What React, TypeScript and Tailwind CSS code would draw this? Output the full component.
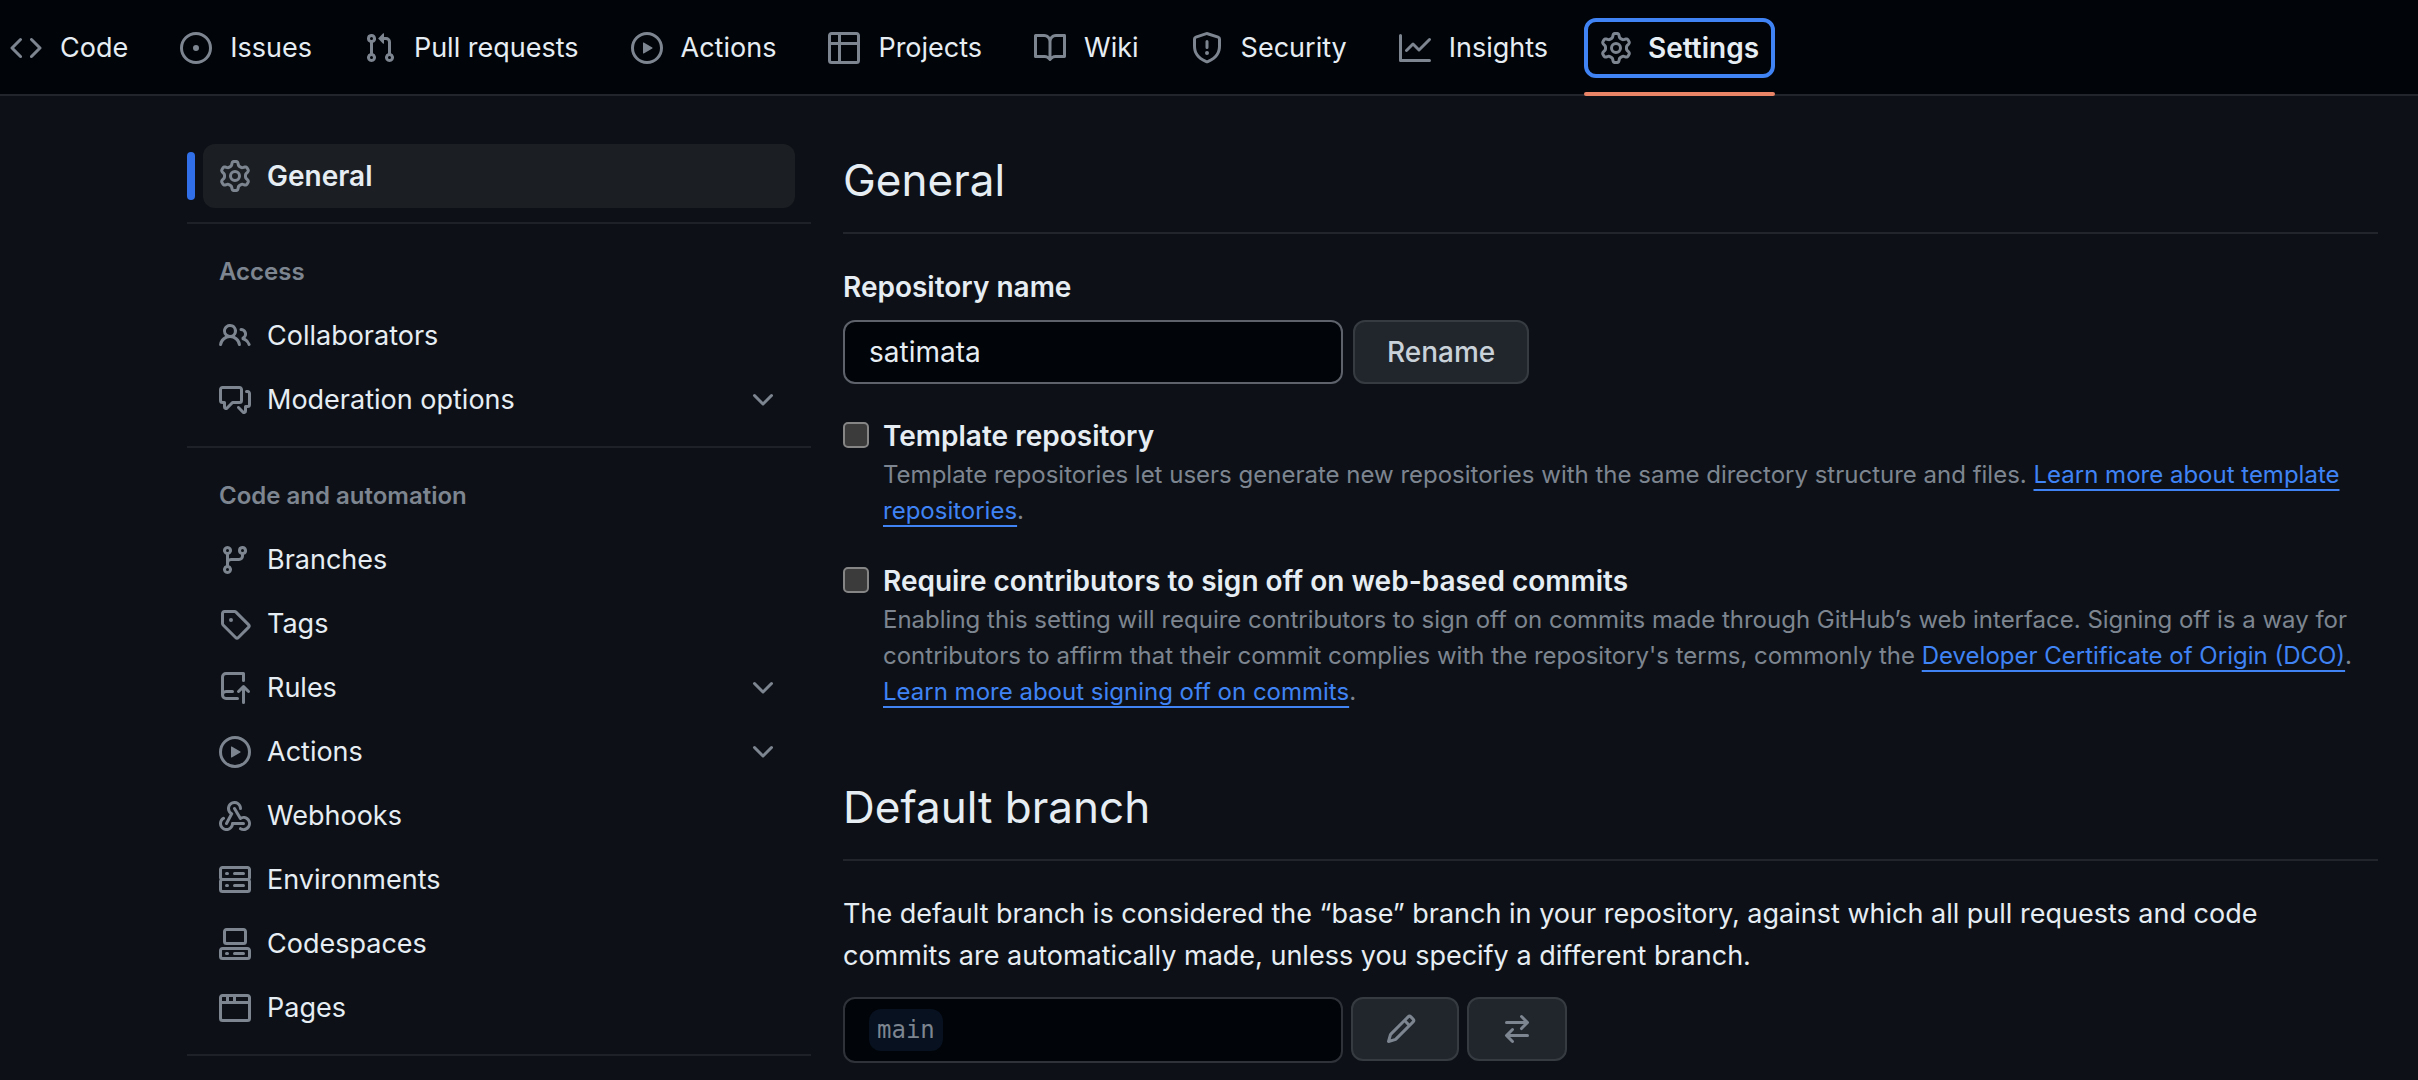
import React from "react";

const icons = {
  code: "m11.28 3.22 4.25 4.25a.75.75 0 0 1 0 1.06l-4.25 4.25a.749.749 0 0 1-1.275-.326.749.749 0 0 1 .215-.734L13.94 8l-3.72-3.72a.749.749 0 0 1 .326-1.275.749.749 0 0 1 .734.215Zm-6.56 0a.751.751 0 0 1 1.042.018.751.751 0 0 1 .018 1.042L2.06 8l3.72 3.72a.749.749 0 0 1-.326 1.275.749.749 0 0 1-.734-.215L.47 8.53a.75.75 0 0 1 0-1.06Z",
  issue: "M8 9.5a1.5 1.5 0 1 0 0-3 1.5 1.5 0 0 0 0 3ZM8 0a8 8 0 1 1 0 16A8 8 0 0 1 8 0ZM1.5 8a6.5 6.5 0 1 0 13 0 6.5 6.5 0 0 0-13 0Z",
  pull: "M1.5 3.25a2.25 2.25 0 1 1 3 2.122v5.256a2.251 2.251 0 1 1-1.5 0V5.372A2.25 2.25 0 0 1 1.5 3.25Zm5.677-.177L9.573.677A.25.25 0 0 1 10 .854V2.5h1A2.5 2.5 0 0 1 13.5 5v5.628a2.251 2.251 0 1 1-1.5 0V5a1 1 0 0 0-1-1h-1v1.646a.25.25 0 0 1-.427.177L7.177 3.427a.25.25 0 0 1 0-.354ZM3.75 2.5a.75.75 0 1 0 0 1.5.75.75 0 0 0 0-1.5Zm0 9.5a.75.75 0 1 0 0 1.5.75.75 0 0 0 0-1.5Zm8.25.75a.75.75 0 1 0 1.5 0 .75.75 0 0 0-1.5 0Z",
  play: "M8 0a8 8 0 1 1 0 16A8 8 0 0 1 8 0ZM1.5 8a6.5 6.5 0 1 0 13 0 6.5 6.5 0 0 0-13 0Zm4.879-2.773 4.264 2.559a.25.25 0 0 1 0 .428l-4.264 2.559A.25.25 0 0 1 6 10.559V5.442a.25.25 0 0 1 .379-.215Z",
  table: "M0 1.75C0 .784.784 0 1.75 0h12.5C15.216 0 16 .784 16 1.75v12.5A1.75 1.75 0 0 1 14.25 16H1.75A1.75 1.75 0 0 1 0 14.25ZM6.5 6.5v8h7.75a.25.25 0 0 0 .25-.25V6.5Zm8-1.5V1.75a.25.25 0 0 0-.25-.25H6.5V5Zm-13 1.5v7.75c0 .138.112.25.25.25H5v-8ZM5 5V1.5H1.75a.25.25 0 0 0-.25.25V5Z",
  book: "M0 1.75A.75.75 0 0 1 .75 1h4.253c1.227 0 2.317.59 3 1.501A3.743 3.743 0 0 1 11.006 1h4.245a.75.75 0 0 1 .75.75v10.5a.75.75 0 0 1-.75.75h-4.507a2.25 2.25 0 0 0-1.591.659l-.622.621a.75.75 0 0 1-1.06 0l-.622-.621A2.25 2.25 0 0 0 5.258 13H.75a.75.75 0 0 1-.75-.75Zm7.251 10.324.004-5.073-.002-2.253A2.25 2.25 0 0 0 5.003 2.5H1.5v9h3.757a3.75 3.75 0 0 1 1.994.574ZM8.755 4.75l-.004 7.322a3.752 3.752 0 0 1 1.992-.572H14.5v-9h-3.495a2.25 2.25 0 0 0-2.25 2.25Z",
  shield: "M7.467.133a1.748 1.748 0 0 1 1.066 0l5.25 1.68A1.75 1.75 0 0 1 15 3.48V7c0 1.566-.32 3.182-1.303 4.682-.983 1.498-2.585 2.813-5.032 3.855a1.697 1.697 0 0 1-1.33 0c-2.447-1.042-4.049-2.357-5.032-3.855C1.32 10.182 1 8.566 1 7V3.48a1.75 1.75 0 0 1 1.217-1.667Zm.61 1.429a.25.25 0 0 0-.153 0l-5.25 1.68a.25.25 0 0 0-.174.238V7c0 1.358.275 2.666 1.057 3.86.784 1.194 2.121 2.34 4.366 3.297a.196.196 0 0 0 .154 0c2.245-.956 3.582-2.104 4.366-3.298C13.225 9.666 13.5 8.36 13.5 7V3.48a.251.251 0 0 0-.174-.237l-5.25-1.68ZM8.75 4.75v3a.75.75 0 0 1-1.5 0v-3a.75.75 0 0 1 1.5 0ZM9 10.5a1 1 0 1 1-2 0 1 1 0 0 1 2 0Z",
  graph: "M1.5 1.75V13.5h13.75a.75.75 0 0 1 0 1.5H.75a.75.75 0 0 1-.75-.75V1.75a.75.75 0 0 1 1.5 0Zm14.28 2.53-5.25 5.25a.75.75 0 0 1-1.06 0L7 7.06 4.28 9.78a.751.751 0 0 1-1.042-.018.751.751 0 0 1-.018-1.042l3.25-3.25a.75.75 0 0 1 1.06 0L10 7.94l4.72-4.72a.751.751 0 0 1 1.042.018.751.751 0 0 1 .018 1.042Z",
  gear: "M8 0a8.2 8.2 0 0 1 .701.031C9.444.095 9.99.645 10.16 1.29l.288 1.107c.018.066.079.158.212.224.231.114.454.243.668.386.123.082.233.09.299.071l1.103-.303c.644-.176 1.392.021 1.82.63.27.385.506.792.704 1.218.315.675.111 1.422-.364 1.891l-.814.806c-.049.048-.098.147-.088.294.016.257.016.515 0 .772-.01.147.038.246.088.294l.814.806c.475.469.679 1.216.364 1.891a7.977 7.977 0 0 1-.704 1.217c-.428.61-1.176.807-1.82.63l-1.102-.302c-.067-.019-.177-.011-.3.071a5.909 5.909 0 0 1-.668.386c-.133.066-.194.158-.211.224l-.29 1.106c-.168.646-.715 1.196-1.458 1.26a8.006 8.006 0 0 1-1.402 0c-.743-.064-1.289-.614-1.458-1.26l-.289-1.106c-.018-.066-.079-.158-.212-.224a5.738 5.738 0 0 1-.668-.386c-.123-.082-.233-.09-.299-.071l-1.103.303c-.644.176-1.392-.021-1.82-.63a8.12 8.12 0 0 1-.704-1.218c-.315-.675-.111-1.422.363-1.891l.815-.806c.05-.048.098-.147.088-.294a6.214 6.214 0 0 1 0-.772c.01-.147-.038-.246-.088-.294l-.815-.806C.635 6.045.431 5.298.746 4.623a7.92 7.92 0 0 1 .704-1.217c.428-.61 1.176-.807 1.82-.63l1.102.302c.067.019.177.011.3-.071.214-.143.437-.272.668-.386.133-.066.194-.158.211-.224l.29-1.106C6.009.645 6.556.095 7.299.03 7.53.01 7.764 0 8 0Zm-.571 1.525c-.036.003-.108.036-.137.146l-.289 1.105c-.147.561-.549.967-.998 1.189-.173.086-.34.183-.5.29-.417.278-.97.423-1.529.27l-1.103-.303c-.109-.03-.175.016-.195.045-.22.312-.412.644-.573.99-.014.031-.021.11.059.19l.815.806c.411.406.562.957.53 1.456a4.709 4.709 0 0 0 0 .582c.032.499-.119 1.05-.53 1.456l-.815.806c-.081.08-.073.159-.059.19.162.346.353.677.573.989.02.03.085.076.195.046l1.102-.303c.56-.153 1.113-.008 1.53.27.161.107.328.204.501.29.447.222.85.629.997 1.189l.289 1.105c.029.109.101.143.137.146a6.6 6.6 0 0 0 1.142 0c.036-.003.108-.036.137-.146l.289-1.105c.147-.561.549-.967.998-1.189.173-.086.34-.183.5-.29.417-.278.97-.423 1.529-.27l1.103.303c.109.029.175-.016.195-.045.22-.313.411-.644.573-.99.014-.031.021-.11-.059-.19l-.815-.806c-.411-.406-.562-.957-.53-1.456a4.709 4.709 0 0 0 0-.582c-.032-.499.119-1.05.53-1.456l.815-.806c.081-.08.073-.159.059-.19a6.464 6.464 0 0 0-.573-.989c-.02-.03-.085-.076-.195-.046l-1.102.303c-.56.153-1.113.008-1.53-.27a4.44 4.44 0 0 0-.501-.29c-.447-.222-.85-.629-.997-1.189l-.289-1.105c-.029-.11-.101-.143-.137-.146a6.6 6.6 0 0 0-1.142 0ZM11 8a3 3 0 1 1-6 0 3 3 0 0 1 6 0ZM9.5 8a1.5 1.5 0 1 0-3.001.001A1.5 1.5 0 0 0 9.5 8Z",
  people: "M2 5.5a3.5 3.5 0 1 1 5.898 2.549 5.508 5.508 0 0 1 3.034 4.084.75.75 0 1 1-1.482.235 4 4 0 0 0-7.9 0 .75.75 0 0 1-1.482-.236A5.507 5.507 0 0 1 3.102 8.05 3.493 3.493 0 0 1 2 5.5ZM11 4a3.001 3.001 0 0 1 2.22 5.018 5.01 5.01 0 0 1 2.56 3.012.749.749 0 0 1-.885.954.752.752 0 0 1-.549-.514 3.507 3.507 0 0 0-2.522-2.372.75.75 0 0 1-.574-.73v-.352a.75.75 0 0 1 .416-.672A1.5 1.5 0 0 0 11 5.5.75.75 0 0 1 11 4Zm-5.5-.5a2 2 0 1 0-.001 3.999A2 2 0 0 0 5.5 3.5Z",
  discussion: "M1.75 1h8.5c.966 0 1.75.784 1.75 1.75v5.5A1.75 1.75 0 0 1 10.25 10H7.061l-2.574 2.573A1.458 1.458 0 0 1 2 11.543V10h-.25A1.75 1.75 0 0 1 0 8.25v-5.5C0 1.784.784 1 1.75 1ZM1.5 2.75v5.5c0 .138.112.25.25.25h1a.75.75 0 0 1 .75.75v2.19l2.72-2.72a.749.749 0 0 1 .53-.22h3.5a.25.25 0 0 0 .25-.25v-5.5a.25.25 0 0 0-.25-.25h-8.5a.25.25 0 0 0-.25.25Zm13 2a.25.25 0 0 0-.25-.25h-.5a.75.75 0 0 1 0-1.5h.5c.966 0 1.75.784 1.75 1.75v5.5A1.75 1.75 0 0 1 14.25 12H14v1.543a1.458 1.458 0 0 1-2.487 1.03L9.22 12.28a.749.749 0 0 1 .326-1.275.749.749 0 0 1 .734.215l2.22 2.22v-2.19a.75.75 0 0 1 .75-.75h1a.25.25 0 0 0 .25-.25Z",
  chevron: "M12.78 5.22a.749.749 0 0 1 0 1.06l-4.25 4.25a.749.749 0 0 1-1.06 0L3.22 6.28a.749.749 0 1 1 1.06-1.06L8 8.939l3.72-3.719a.749.749 0 0 1 1.06 0Z",
  branch: "M9.5 3.25a2.25 2.25 0 1 1 3 2.122V6A2.5 2.5 0 0 1 10 8.5H6a1 1 0 0 0-1 1v1.128a2.251 2.251 0 1 1-1.5 0V5.372a2.25 2.25 0 1 1 1.5 0v1.836A2.493 2.493 0 0 1 6 7h4a1 1 0 0 0 1-1v-.628A2.25 2.25 0 0 1 9.5 3.25Zm-6 0a.75.75 0 1 0 1.5 0 .75.75 0 0 0-1.5 0Zm8.25-.75a.75.75 0 1 0 0 1.5.75.75 0 0 0 0-1.5ZM4.25 12a.75.75 0 1 0 0 1.5.75.75 0 0 0 0-1.5Z",
  tag: "M1 7.775V2.75C1 1.784 1.784 1 2.75 1h5.025c.464 0 .91.184 1.238.513l6.25 6.25a1.75 1.75 0 0 1 0 2.474l-5.026 5.026a1.75 1.75 0 0 1-2.474 0l-6.25-6.25A1.752 1.752 0 0 1 1 7.775Zm1.5 0c0 .066.026.13.073.177l6.25 6.25a.25.25 0 0 0 .354 0l5.025-5.025a.25.25 0 0 0 0-.354l-6.25-6.25a.25.25 0 0 0-.177-.073H2.75a.25.25 0 0 0-.25.25ZM6 5a1 1 0 1 1 0 2 1 1 0 0 1 0-2Z",
  push: "M1 2.5A2.5 2.5 0 0 1 3.5 0h8.75a.75.75 0 0 1 .75.75v3.5a.75.75 0 0 1-1.5 0V1.5h-8a1 1 0 0 0-1 1v6.708A2.493 2.493 0 0 1 3.5 9h3.25a.75.75 0 0 1 0 1.5H3.5a1 1 0 0 0 0 2h5.75a.75.75 0 0 1 0 1.5H3.5A2.5 2.5 0 0 1 1 11.5Zm13.23 7.79h-.001l-1.224-1.224v6.184a.75.75 0 0 1-1.5 0V9.066L10.28 10.29a.75.75 0 0 1-1.06-1.061l2.505-2.504a.75.75 0 0 1 1.06 0L15.29 9.23a.751.751 0 0 1-.018 1.042.751.751 0 0 1-1.042.018Z",
  webhook: "M5.5 4.25a2.25 2.25 0 0 1 4.5 0 .75.75 0 0 0 1.5 0 3.75 3.75 0 1 0-6.14 2.889l-2.272 4.258a.75.75 0 0 0 1.324.706L7 7.25a.75.75 0 0 0-.309-1.015A2.25 2.25 0 0 1 5.5 4.25Z M7.364 3.607a.75.75 0 0 1 1.03.257l2.608 4.349a3.75 3.75 0 1 1-.628 6.785.75.75 0 0 1 .752-1.299 2.25 2.25 0 1 0-.033-3.88.75.75 0 0 1-1.03-.256L7.107 4.636a.75.75 0 0 1 .257-1.03Z M2.9 8.776A.75.75 0 0 1 2.625 9.8 2.25 2.25 0 1 0 6 11.75a.75.75 0 0 1 .75-.751h5.5a.75.75 0 0 1 0 1.5H7.425a3.751 3.751 0 1 1-5.55-3.998.75.75 0 0 1 1.024.274Z",
  server: "M1.75 1h12.5c.966 0 1.75.784 1.75 1.75v4c0 .372-.116.717-.314 1 .198.283.314.628.314 1v4a1.75 1.75 0 0 1-1.75 1.75H1.75A1.75 1.75 0 0 1 0 12.75v-4c0-.358.109-.707.314-1a1.739 1.739 0 0 1-.314-1v-4C0 1.784.784 1 1.75 1ZM1.5 2.75v4c0 .138.112.25.25.25h12.5a.25.25 0 0 0 .25-.25v-4a.25.25 0 0 0-.25-.25H1.75a.25.25 0 0 0-.25.25Zm.25 5.75a.25.25 0 0 0-.25.25v4c0 .138.112.25.25.25h12.5a.25.25 0 0 0 .25-.25v-4a.25.25 0 0 0-.25-.25ZM7 4.75A.75.75 0 0 1 7.75 4h4.5a.75.75 0 0 1 0 1.5h-4.5A.75.75 0 0 1 7 4.75ZM7.75 10h4.5a.75.75 0 0 1 0 1.5h-4.5a.75.75 0 0 1 0-1.5ZM3 4.75A.75.75 0 0 1 3.75 4h.5a.75.75 0 0 1 0 1.5h-.5A.75.75 0 0 1 3 4.75ZM3.75 10h.5a.75.75 0 0 1 0 1.5h-.5a.75.75 0 0 1 0-1.5Z",
  codespaces: "M0 11.25c0-.966.784-1.75 1.75-1.75h12.5c.966 0 1.75.784 1.75 1.75v3A1.75 1.75 0 0 1 14.25 16H1.75A1.75 1.75 0 0 1 0 14.25Zm2-9.5C2 .784 2.784 0 3.75 0h8.5C13.216 0 14 .784 14 1.75v5a1.75 1.75 0 0 1-1.75 1.75h-8.5A1.75 1.75 0 0 1 2 6.75Zm1.75-.25a.25.25 0 0 0-.25.25v5c0 .138.112.25.25.25h8.5a.25.25 0 0 0 .25-.25v-5a.25.25 0 0 0-.25-.25Zm-2 9.5a.25.25 0 0 0-.25.25v3c0 .138.112.25.25.25h12.5a.25.25 0 0 0 .25-.25v-3a.25.25 0 0 0-.25-.25Z M7 12.75a.75.75 0 0 1 .75-.75h4.5a.75.75 0 0 1 0 1.5h-4.5a.75.75 0 0 1-.75-.75Zm-4 0a.75.75 0 0 1 .75-.75h.5a.75.75 0 0 1 0 1.5h-.5a.75.75 0 0 1-.75-.75Z",
  browser: "M0 2.75C0 1.784.784 1 1.75 1h12.5c.966 0 1.75.784 1.75 1.75v10.5A1.75 1.75 0 0 1 14.25 15H1.75A1.75 1.75 0 0 1 0 13.25ZM14.5 6h-13v7.25c0 .138.112.25.25.25h12.5a.25.25 0 0 0 .25-.25Zm-6-3.5v2h6V2.75a.25.25 0 0 0-.25-.25ZM5 2.5v2h2v-2Zm-3.25 0a.25.25 0 0 0-.25.25V4.5h2v-2Z",
  pencil: "M11.013 1.427a1.75 1.75 0 0 1 2.474 0l1.086 1.086a1.75 1.75 0 0 1 0 2.474l-8.61 8.61c-.21.21-.47.364-.756.445l-3.251.93a.75.75 0 0 1-.927-.928l.929-3.25c.081-.286.235-.547.445-.758l8.61-8.61Zm.176 4.823L9.75 4.81l-6.286 6.287a.253.253 0 0 0-.064.108l-.558 1.953 1.953-.558a.253.253 0 0 0 .108-.064Zm1.238-3.763a.25.25 0 0 0-.354 0L10.811 3.75l1.439 1.44 1.263-1.263a.25.25 0 0 0 0-.354Z",
  swap: "M5.22 14.78a.75.75 0 0 0 1.06-1.06L4.56 12h8.69a.75.75 0 0 0 0-1.5H4.56l1.72-1.72a.75.75 0 0 0-1.06-1.06l-3 3a.75.75 0 0 0 0 1.06l3 3Zm5.56-6.5a.75.75 0 1 1-1.06-1.06l1.72-1.72H2.75a.75.75 0 0 1 0-1.5h8.69L9.72 2.28a.75.75 0 0 1 1.06-1.06l3 3a.75.75 0 0 1 0 1.06l-3 3Z",
};

type IconName = keyof typeof icons;

function Icon({ name }: { name: IconName }) {
  return (
    <svg viewBox="0 0 16 16" className="size-8 shrink-0 fill-[#7d8590]" aria-hidden="true">
      <path d={icons[name]} />
    </svg>
  );
}

const tabs: { label: string; icon: IconName }[] = [
  { label: "Code", icon: "code" },
  { label: "Issues", icon: "issue" },
  { label: "Pull requests", icon: "pull" },
  { label: "Actions", icon: "play" },
  { label: "Projects", icon: "table" },
  { label: "Wiki", icon: "book" },
  { label: "Security", icon: "shield" },
  { label: "Insights", icon: "graph" },
];

function RepoTabs() {
  return (
    <nav className="-ml-1.5 flex h-24 items-stretch gap-5 border-b-2 border-[#22262c] bg-[#010409] text-[27px]">
      {tabs.map((t) => (
        <a key={t.label} href="#" className="flex items-center gap-[18px] px-4 pt-0.5">
          <Icon name={t.icon} />
          {t.label}
        </a>
      ))}
      <a
        href="#"
        aria-current="page"
        className="-mb-0.5 flex flex-col justify-between pt-[18px] text-[28px] font-semibold"
      >
        <span className="flex h-[60px] items-center gap-4 rounded-xl border-4 border-[#3f83f5] px-3">
          <Icon name="gear" />
          Settings
        </span>
        <span className="h-1 rounded-sm bg-[#ea8467]" />
      </a>
    </nav>
  );
}

function NavItem({ icon, label, menu }: { icon: IconName; label: string; menu?: boolean }) {
  const body = (
    <>
      <Icon name={icon} />
      <span className="flex-1 text-left">{label}</span>
      {menu && <Icon name="chevron" />}
    </>
  );
  return (
    <li className="mx-4 text-[27px]">
      {menu ? (
        <button type="button" className="flex h-16 w-full items-center gap-4 px-4">
          {body}
        </button>
      ) : (
        <a href="#" className="flex h-16 items-center gap-4 px-4">
          {body}
        </a>
      )}
    </li>
  );
}

function NavGroup({ title, children }: { title: string; children: React.ReactNode }) {
  return (
    <section className="border-b-2 border-[#1e2228] pt-4 pb-3.5">
      <h3 className="flex h-16 items-center px-8 text-[24px] font-semibold text-[#7d8590]">{title}</h3>
      <ul>{children}</ul>
    </section>
  );
}

function Sidebar() {
  return (
    <nav className="w-[624px] shrink-0">
      <div className="flex items-center gap-2 border-b-2 border-[#1e2228] pb-3.5">
        <span className="h-12 w-2 rounded-full bg-[#306fe8]" />
        <a
          href="#"
          aria-current="page"
          className="mr-4 flex h-16 flex-1 items-center gap-4 rounded-xl bg-[#1b1f23] px-4 font-semibold"
        >
          <Icon name="gear" />
          General
        </a>
      </div>
      <NavGroup title="Access">
        <NavItem icon="people" label="Collaborators" />
        <NavItem icon="discussion" label="Moderation options" menu />
      </NavGroup>
      <NavGroup title="Code and automation">
        <NavItem icon="branch" label="Branches" />
        <NavItem icon="tag" label="Tags" />
        <NavItem icon="push" label="Rules" menu />
        <NavItem icon="play" label="Actions" menu />
        <NavItem icon="webhook" label="Webhooks" />
        <NavItem icon="server" label="Environments" />
        <NavItem icon="codespaces" label="Codespaces" />
        <NavItem icon="browser" label="Pages" />
      </NavGroup>
    </nav>
  );
}

function Heading({ children }: { children: React.ReactNode }) {
  return (
    <h2 className="border-b-2 border-[#22262c] pb-4 text-[44px] leading-[72px] font-normal">{children}</h2>
  );
}

function TextLink({ children }: { children: React.ReactNode }) {
  return (
    <a
      href="#"
      className="text-[#3f83f5] underline decoration-2 underline-offset-[6px] [text-decoration-skip-ink:none]"
    >
      {children}
    </a>
  );
}

function CheckOption({ id, label, children }: { id: string; label: string; children: React.ReactNode }) {
  return (
    <div className="mt-[31px] flex gap-[14px]">
      <input
        type="checkbox"
        id={id}
        className="mt-[7px] size-[26px] shrink-0 appearance-none rounded-[5px] border-2 border-[#858585] bg-[#3b3b3b]"
      />
      <div>
        <label htmlFor={id} className="block font-semibold">
          {label}
        </label>
        <p className="text-[24px] leading-9 text-[#7d8590]">{children}</p>
      </div>
    </div>
  );
}

const buttonClass =
  "flex h-16 items-center justify-center rounded-xl border-2 border-[#363b42] bg-[#21262d] font-medium text-[#c9d1d9]";

export default function App() {
  return (
    <div className="h-screen overflow-hidden bg-[#0d1117] font-['Inter',sans-serif] text-[28px] leading-[42px] text-[#e6edf3]">
      <RepoTabs />
      <div className="flex gap-8 pt-12 pr-10 pl-[187px]">
        <Sidebar />
        <main className="min-w-0 flex-1">
          <Heading>General</Heading>
          <label htmlFor="repo-name" className="mt-8 block font-semibold">
            Repository name
          </label>
          <div className="mt-3 flex gap-2.5">
            <input
              id="repo-name"
              defaultValue="satimata"
              className="h-16 w-[500px] rounded-xl border-2 border-[#5d626b] bg-[#010409] px-6"
            />
            <button type="button" className={`${buttonClass} px-8`}>
              Rename
            </button>
          </div>
          <CheckOption id="template" label="Template repository">
            Template repositories let users generate new repositories with the same directory structure and files.{" "}
            <TextLink>Learn more about template repositories</TextLink>.
          </CheckOption>
          <CheckOption id="signoff" label="Require contributors to sign off on web-based commits">
            Enabling this setting will require contributors to sign off on commits made through GitHub’s web interface.
            Signing off is a way for contributors to affirm that their commit complies with the repository's terms,
            commonly the <TextLink>Developer Certificate of Origin (DCO)</TextLink>.{" "}
            <TextLink>Learn more about signing off on commits</TextLink>.
          </CheckOption>
          <section className="mt-[61px]">
            <Heading>Default branch</Heading>
            <p className="mt-8 text-[27px]">
              The default branch is considered the “base” branch in your repository, against which all pull requests and
              code <br />
              commits are automatically made, unless you specify a different branch.
            </p>
            <div className="mt-5 flex items-start gap-2">
              <div className="flex h-[66px] w-[500px] items-center rounded-xl border-2 border-[#2f3339] bg-[#010409] px-6">
                <span className="rounded-xl bg-[#07111f] px-2 font-['DejaVu_Sans_Mono',monospace] text-[24px] text-[#7d8590]">
                  main
                </span>
              </div>
              <button type="button" aria-label="Rename branch" className={`${buttonClass} w-[108px] pr-2`}>
                <Icon name="pencil" />
              </button>
              <button
                type="button"
                aria-label="Switch to another branch"
                className={`${buttonClass} w-[100px]`}
              >
                <Icon name="swap" />
              </button>
            </div>
          </section>
        </main>
      </div>
    </div>
  );
}
